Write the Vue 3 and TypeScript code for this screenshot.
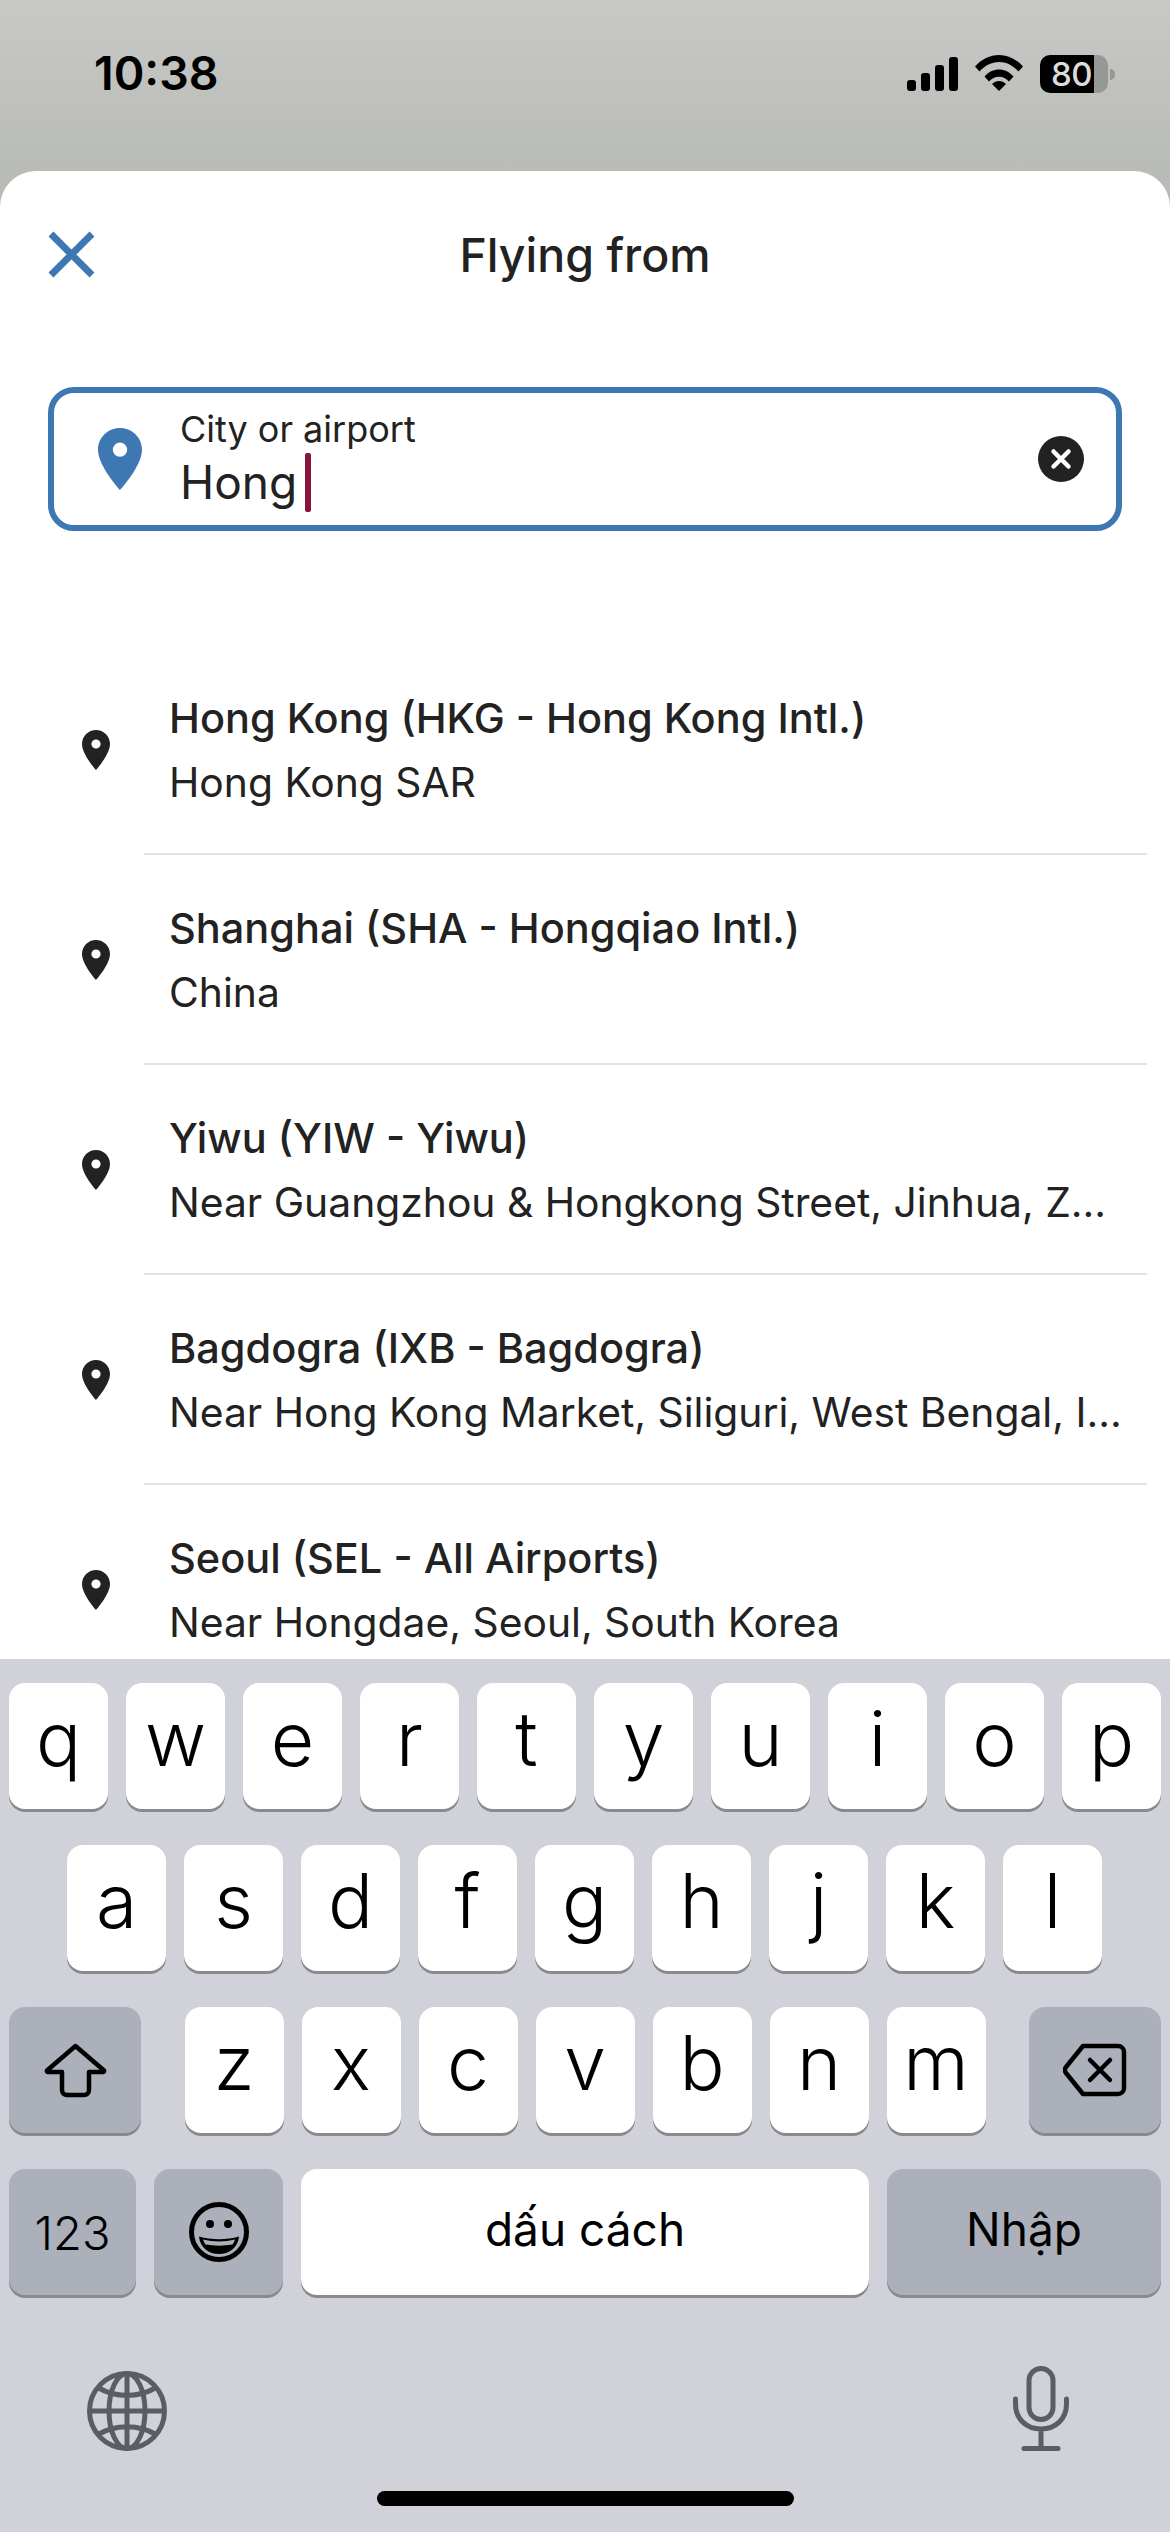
<script setup lang="ts">
interface Place { title: string; sub: string }
const places: Place[] = [
  { title: 'Hong Kong (HKG - Hong Kong Intl.)', sub: 'Hong Kong SAR' },
  { title: 'Shanghai (SHA - Hongqiao Intl.)', sub: 'China' },
  { title: 'Yiwu (YIW - Yiwu)', sub: 'Near Guangzhou & Hongkong Street, Jinhua, Z...' },
  { title: 'Bagdogra (IXB - Bagdogra)', sub: 'Near Hong Kong Market, Siliguri, West Bengal, I...' },
  { title: 'Seoul (SEL - All Airports)', sub: 'Near Hongdae, Seoul, South Korea' }
]
const row1 = 'qwertyuiop'.split('')
const row2 = 'asdfghjkl'.split('')
const row3 = 'zxcvbnm'.split('')
const pin = 'M12 2C8.13 2 5 5.13 5 9c0 5.25 7 13 7 13s7-7.75 7-13c0-3.87-3.13-7-7-7zm0 9.3a2.3 2.3 0 1 1 0-4.6 2.3 2.3 0 0 1 0 4.6z'
</script>

<template>
  <div class="screen">
    <header class="status">
      <span class="time">10:38</span>
      <div class="status-icons">
        <div class="signal">
          <i class="b1"></i><i class="b2"></i><i class="b3"></i><i class="b4"></i>
        </div>
        <svg class="wifi" viewBox="0 0 48 36" width="48" height="36">
          <path d="M0 11.5C6.5 4.2 15 0 24 0s17.500 4.200 24 11.500l-4.500 5C38 10.500 31.500 7 24 7S10 10.500 4.500 16.500z" />
          <path d="M9.500 21.500C13.500 17 18.500 14.500 24 14.500s10.500 2.500 14.500 7L34 26.500c-2.800-3-6-4.800-10-4.800s-7.200 1.800-10 4.800z" />
          <path d="M17 29c2-2 4.300-3 7-3s5 1 7 3l-7 7z" />
        </svg>
        <div class="battery">
          <div class="battery-body"><span>80</span></div>
          <i class="nub"></i>
        </div>
      </div>
    </header>

    <main class="sheet">
      <div class="sheet-head">
        <svg class="close" viewBox="0 0 47 47" width="47" height="47">
          <path d="M3 3L44 44M44 3L3 44" stroke="#3d78b3" stroke-width="7" fill="none" />
        </svg>
        <h1>Flying from</h1>
      </div>

      <div class="field">
        <svg class="field-pin" viewBox="5 2 14 20" width="44" height="62" preserveAspectRatio="none">
          <path :d="pin" fill="#3d78b3" fill-rule="evenodd" />
        </svg>
        <div class="field-text">
          <label>City or airport</label>
          <div class="value">Hong<i class="caret"></i></div>
        </div>
        <svg class="clear" viewBox="0 0 46 46" width="46" height="46">
          <circle cx="23" cy="23" r="23" fill="#222" />
          <path d="M15.500 15.500L30.500 30.500M30.500 15.500L15.500 30.500" stroke="#fff" stroke-width="4.500" stroke-linecap="round" />
        </svg>
      </div>

      <ul class="list">
        <li v-for="p in places" :key="p.title" class="row">
          <svg class="row-pin" viewBox="5 2 14 20" width="28" height="40">
            <path :d="pin" fill="#222" fill-rule="evenodd" />
          </svg>
          <div class="row-body">
            <div class="row-title">{{ p.title }}</div>
            <div class="row-sub">{{ p.sub }}</div>
          </div>
        </li>
      </ul>
    </main>

    <section class="kb">
      <div class="kb-row row-a">
        <button v-for="k in row1" :key="k" class="key">{{ k }}</button>
      </div>
      <div class="kb-row row-b">
        <button v-for="k in row2" :key="k" class="key">{{ k }}</button>
      </div>
      <div class="kb-row row-c">
        <button class="key fn shift">
          <svg viewBox="0 0 63 55" width="63" height="55">
            <path d="M31.500 3L60 27.500a1 1 0 0 1-.5 1.500H45V47a5 5 0 0 1-5 5H23a5 5 0 0 1-5-5V29H3.500a1 1 0 0 1-.5-1.500z" fill="none" stroke="#000" stroke-width="4.500" stroke-linejoin="round" />
          </svg>
        </button>
        <div class="letters">
          <button v-for="k in row3" :key="k" class="key">{{ k }}</button>
        </div>
        <button class="key fn del">
          <svg viewBox="0 0 64 54" width="64" height="54">
            <path d="M20 3H55a6 6 0 0 1 6 6V45a6 6 0 0 1-6 6H20L3 30a5 5 0 0 1 0-6z" fill="none" stroke="#000" stroke-width="4.500" stroke-linejoin="round" />
            <path d="M27 17L47 37M47 17L27 37" stroke="#000" stroke-width="4.500" stroke-linecap="round" />
          </svg>
        </button>
      </div>
      <div class="kb-row row-d">
        <button class="key fn num">123</button>
        <button class="key fn emoji">
          <svg viewBox="0 0 60 60" width="60" height="60">
            <circle cx="30" cy="30" r="27.500" fill="none" stroke="#000" stroke-width="5" />
            <circle cx="21" cy="22" r="4" />
            <circle cx="39" cy="22" r="4" />
            <path d="M10 34.500C22 38 38 38 50 34.500C49 46 40 52 30 52S11 46 10 34.500z" fill="#000" />
            <path d="M14 37.500C24 40 36 40 46 37.500C45 40 44.500 41 43.500 42.500C35 44 25 44 16.500 42.500C15.500 41 15 40 14 37.500z" fill="#aab0ba" />
          </svg>
        </button>
        <button class="key space">dấu cách</button>
        <button class="key fn enter">Nhập</button>
      </div>
      <div class="kb-bottom">
        <svg viewBox="0 0 80 80" width="80" height="80" fill="none" stroke="#5b5d62" stroke-width="5">
          <circle cx="40" cy="40" r="37.500" />
          <ellipse cx="40" cy="40" rx="18" ry="37.500" />
          <path d="M40 2.500V77.500M2.500 40H77.500M11 16.500C28 27 52 27 69 16.500M11 63.500C28 53 52 53 69 63.500" />
        </svg>
        <svg viewBox="0 0 56 85" width="56" height="85" fill="none" stroke="#5b5d62" stroke-width="5" stroke-linecap="round">
          <rect x="16" y="2.500" width="24" height="51" rx="12" />
          <path d="M2.500 33V38C2.500 53 13.500 63 28 63S53.500 53 53.500 38V33M28 63V82.500M11 82.500H45" />
        </svg>
      </div>
      <div class="home"></div>
    </section>
  </div>
</template>

<style>
html, body { margin: 0; padding: 0; }
</style>

<style scoped>
.screen {
  width: 1170px;
  height: 2532px;
  display: flex;
  flex-direction: column;
  overflow: hidden;
  background: linear-gradient(#c8c9c6, #b9bbb7 171px);
  font-family: Inter, "Noto Sans", sans-serif;
  color: #222;
}
.status {
  height: 171px;
  flex: none;
  display: flex;
  justify-content: space-between;
  align-items: flex-start;
  padding: 50px 55px 0 94px;
  box-sizing: border-box;
}
.time {
  font-size: 46.500px;
  line-height: 46px;
  font-weight: 600;
  color: #000;
}
.status-icons {
  display: flex;
  align-items: flex-start;
  margin-top: 5px;
}
.signal {
  display: flex;
  align-items: flex-end;
  gap: 5px;
  height: 34px;
  margin-top: 2px;
  margin-right: 17px;
}
.signal i { width: 9px; border-radius: 3px; background: #000; }
.b1 { height: 11px; }
.b2 { height: 18px; }
.b3 { height: 26px; }
.b4 { height: 34px; }
.wifi { fill: #000; margin-right: 17px; }
.battery { display: flex; align-items: center; gap: 2px; }
.battery-body {
  width: 68px;
  height: 38px;
  border-radius: 10px;
  background: linear-gradient(90deg, #000 54px, #969896 54px);
  display: flex;
  align-items: center;
  padding-left: 11px;
  box-sizing: border-box;
}
.battery-body span {
  font-size: 33px;
  font-weight: 500;
  color: #dcdcdc;
  letter-spacing: -0.5px;
}
.nub {
  width: 5px;
  height: 11px;
  background: #969896;
  border-radius: 0 6px 6px 0;
}
.sheet {
  flex: 1;
  min-height: 0;
  overflow: hidden;
  background: #fff;
  border-radius: 36px 36px 0 0;
}
.sheet-head {
  position: relative;
  height: 168px;
  padding: 60px 0 0 48px;
  box-sizing: border-box;
  margin-bottom: 48px;
}
.close { display: block; }
.sheet-head h1 {
  position: absolute;
  left: 0;
  right: 0;
  top: 58px;
  margin: 0;
  text-align: center;
  font-size: 46.500px;
  line-height: 52px;
  font-weight: 500;
}
.field {
  margin: 0 48px;
  height: 144px;
  box-sizing: border-box;
  border: 6px solid #3d78b3;
  border-radius: 26px;
  display: flex;
  align-items: center;
  padding: 0 32px 0 44px;
}
.field-pin { flex: none; margin-right: 38px; }
.field-text { flex: 1; }
.field-text label {
  display: block;
  font-size: 36px;
  line-height: 44px;
  color: #222;
}
.value {
  display: flex;
  align-items: center;
  font-size: 46px;
  line-height: 58px;
  color: #222;
  margin-top: 2px;
  font-weight: 400;
}
.caret {
  width: 6px;
  height: 59px;
  margin-left: 8px;
  border-radius: 2px;
  background: #8a1538;
}
.clear { flex: none; }
.list {
  list-style: none;
  margin: 114px 0 0;
  padding: 0;
}
.row {
  height: 210px;
  display: flex;
  align-items: center;
  box-sizing: border-box;
  padding-left: 82px;
}
.row-pin { flex: none; margin-right: 34px; }
.row-body {
  align-self: stretch;
  flex: 1;
  margin-right: 23px;
  padding: 49px 0 0 25px;
  border-bottom: 2px solid #e2e2e2;
  min-width: 0;
}
.row:last-child .row-body { border-bottom: 0; }
.row-title {
  font-size: 41.500px;
  line-height: 48px;
  font-weight: 500;
  white-space: nowrap;
}
.row-sub {
  margin-top: 16px;
  font-size: 40.800px;
  line-height: 48px;
  white-space: nowrap;
}
.kb {
  flex: none;
  height: 873px;
  box-sizing: border-box;
  background: #d0d1d9;
  padding: 24px 9px 0;
}
.kb-row {
  display: flex;
  gap: 18px;
  height: 126px;
  margin-bottom: 36px;
}
.row-b { padding-left: 58px; }
.row-c { justify-content: space-between; }
.letters { display: flex; gap: 18px; }
.key {
  width: 99px;
  height: 126px;
  padding: 0;
  border: 0;
  border-radius: 16px;
  background: #fff;
  box-shadow: 0 3px 0 #898a8e;
  font-family: Inter, "Noto Sans", sans-serif;
  font-size: 75px;
  font-weight: 350;
  color: #000;
  display: flex;
  align-items: center;
  justify-content: center;
  padding-bottom: 16px;
  box-sizing: border-box;
}
.fn { background: #abb0ba; padding-bottom: 0; }
.shift, .del { width: 132px; }
.num { width: 127px; font-size: 47px; }
.emoji { width: 129px; }
.space { flex: 1; width: auto; font-size: 46px; font-weight: 400; padding-bottom: 6px; }
.enter { width: 274px; font-size: 46px; font-weight: 400; padding-bottom: 6px; }
.kb-bottom {
  display: flex;
  justify-content: space-between;
  align-items: flex-end;
  padding: 0 92px 0 78px;
  margin-top: 71px;
}
.home {
  width: 417px;
  height: 15px;
  border-radius: 8px;
  background: #000;
  margin: 40px auto 0;
}
</style>
